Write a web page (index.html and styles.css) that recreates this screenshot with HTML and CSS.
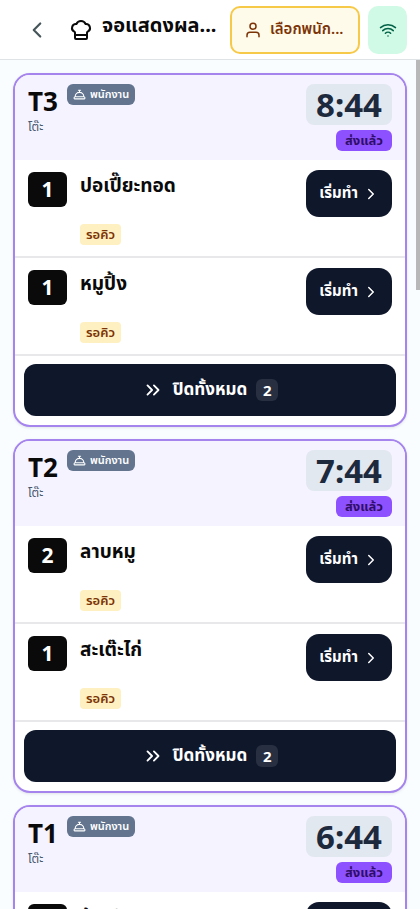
FILE: index.html
```html
<!DOCTYPE html>
<html lang="th">
<head>
<meta charset="utf-8">
<meta name="viewport" content="width=device-width, initial-scale=1">
<title>จอแสดงผลครัว</title>
<link rel="stylesheet" href="styles.css">
</head>
<body>
<svg class="sprite" aria-hidden="true">
  <symbol id="bell" viewBox="0 0 24 24"><path d="M3 20a1 1 0 0 1-1-1v-1a2 2 0 0 1 2-2h16a2 2 0 0 1 2 2v1a1 1 0 0 1-1 1ZM20 16a8 8 0 1 0-16 0M12 4v4M10 4h4"/></symbol>
  <symbol id="chevron" viewBox="0 0 24 24"><path d="m9 18 6-6-6-6"/></symbol>
  <symbol id="chevrons" viewBox="0 0 24 24"><path d="m6 17 5-5-5-5M13 17l5-5-5-5"/></symbol>
</svg>
<header class="topbar">
  <button class="back" aria-label="ย้อนกลับ"><svg viewBox="0 0 24 24"><path d="m15 18-6-6 6-6"/></svg></button>
  <svg class="chef" viewBox="0 0 24 24" aria-hidden="true"><path d="M17 21a1 1 0 0 0 1-1v-5.35c0-.457.316-.844.727-1.041a4 4 0 0 0-2.134-7.589 5 5 0 0 0-9.186 0 4 4 0 0 0-2.134 7.588c.411.198.727.585.727 1.041V20a1 1 0 0 0 1 1ZM6 17h12"/></svg>
  <h1 class="title">จอแสดงผล...</h1>
  <button class="staff"><svg viewBox="0 0 24 24"><circle cx="12" cy="7" r="4"/><path d="M4 21v-2a4 4 0 0 1 4-4h8a4 4 0 0 1 4 4v2"/></svg><span>เลือกพนัก...</span></button>
  <button class="wifi" aria-label="เชื่อมต่อแล้ว"><svg viewBox="0 0 24 24"><path d="M12 20h.01M2 8.820a15 15 0 0 1 20 0M5 12.859a10 10 0 0 1 14 0M8.500 16.429a5 5 0 0 1 7 0"/></svg></button>
</header>
<main class="orders">
  <article class="card">
    <header class="card-head">
      <div class="table-info"><h2>T3</h2><p>โต๊ะ</p></div>
      <span class="source"><svg><use href="#bell"/></svg>พนักงาน</span>
      <div class="status"><time>8:44</time><span class="sent">ส่งแล้ว</span></div>
    </header>
    <ul>
      <li><span class="qty">1</span><div class="dish"><h3>ปอเปี๊ยะทอด</h3><span class="queue">รอคิว</span></div><button class="start">เริ่มทำ<svg><use href="#chevron"/></svg></button></li>
      <li><span class="qty">1</span><div class="dish"><h3>หมูปิ้ง</h3><span class="queue">รอคิว</span></div><button class="start">เริ่มทำ<svg><use href="#chevron"/></svg></button></li>
    </ul>
    <footer><button class="close-all"><svg><use href="#chevrons"/></svg>ปิดทั้งหมด<span class="count">2</span></button></footer>
  </article>
  <article class="card">
    <header class="card-head">
      <div class="table-info"><h2>T2</h2><p>โต๊ะ</p></div>
      <span class="source"><svg><use href="#bell"/></svg>พนักงาน</span>
      <div class="status"><time>7:44</time><span class="sent">ส่งแล้ว</span></div>
    </header>
    <ul>
      <li><span class="qty">2</span><div class="dish"><h3>ลาบหมู</h3><span class="queue">รอคิว</span></div><button class="start">เริ่มทำ<svg><use href="#chevron"/></svg></button></li>
      <li><span class="qty">1</span><div class="dish"><h3>สะเต๊ะไก่</h3><span class="queue">รอคิว</span></div><button class="start">เริ่มทำ<svg><use href="#chevron"/></svg></button></li>
    </ul>
    <footer><button class="close-all"><svg><use href="#chevrons"/></svg>ปิดทั้งหมด<span class="count">2</span></button></footer>
  </article>
  <article class="card">
    <header class="card-head">
      <div class="table-info"><h2>T1</h2><p>โต๊ะ</p></div>
      <span class="source"><svg><use href="#bell"/></svg>พนักงาน</span>
      <div class="status"><time>6:44</time><span class="sent">ส่งแล้ว</span></div>
    </header>
    <ul>
      <li><span class="qty">1</span><div class="dish"><h3>ข้าวผัดปู</h3><span class="queue">รอคิว</span></div><button class="start">เริ่มทำ<svg><use href="#chevron"/></svg></button></li>
    </ul>
  </article>
</main>
<div class="scroll-thumb"></div>
</body>
</html>
```

FILE: styles.css
```css
* { box-sizing: border-box; margin: 0; padding: 0; }
body {
  height: 100vh;
  display: flex;
  flex-direction: column;
  overflow: hidden;
  background: #fafdff;
  color: #0a0a0a;
  font-family: "Noto Sans", "Noto Sans Thai", sans-serif;
}
button { font: inherit; border: 0; cursor: pointer; }
svg { fill: none; stroke: currentColor; stroke-width: 2; stroke-linecap: round; stroke-linejoin: round; flex: none; }
ul { list-style: none; }
.sprite { display: none; }

.topbar {
  flex: none;
  height: 60px;
  display: flex;
  align-items: center;
  padding: 0 13px;
  background: #fff;
  border-bottom: 1px solid #dfe3e6;
}
.back { width: 48px; height: 48px; display: grid; place-items: center; background: none; color: #45555a; }
.back svg { width: 26px; height: 26px; }
.chef { width: 24px; height: 24px; margin: 0 9px 0 8px; }
.title {
  flex: 1;
  min-width: 0;
  white-space: nowrap;
  font-size: 20px;
  line-height: 32px;
  padding-bottom: 10px;
}
.staff {
  width: 130px;
  height: 48px;
  margin: 0 8px 0 16px;
  padding: 0 12px;
  display: flex;
  align-items: center;
  gap: 8px;
  border: 2px solid #f7c948;
  border-radius: 10px;
  background: #fffbeb;
  color: #7b3306;
  font-size: 15px;
  font-weight: 600;
}
.staff svg { width: 18px; height: 18px; }
.staff span { min-width: 0; white-space: nowrap; }
.wifi { width: 39px; height: 48px; display: grid; place-items: center; border-radius: 10px; background: #d0fae5; color: #006045; }
.wifi svg { width: 18px; height: 18px; }

.orders {
  flex: 1;
  min-height: 0;
  overflow-y: auto;
  scrollbar-width: none;
  display: flex;
  flex-direction: column;
  gap: 12px;
  padding: 13px;
}
.card {
  flex: none;
  overflow: hidden;
  border: 2px solid #a684ee;
  border-radius: 17px;
  background: #fff;
  box-shadow: 0 1px 3px rgba(0, 0, 0, .1);
}
.card-head {
  height: 85px;
  display: flex;
  align-items: flex-start;
  padding: 9px 13px;
  background: #f5f3ff;
}
.table-info h2 { font-size: 26px; line-height: 34px; }
.table-info p { font-size: 12px; line-height: 18px; color: #45556c; }
.source {
  height: 21px;
  display: flex;
  align-items: center;
  gap: 4px;
  margin-left: 9px;
  padding: 0 6px;
  border-radius: 6px;
  background: #62748e;
  color: #fff;
  font-size: 11px;
  font-weight: 600;
}
.source svg { width: 13px; height: 13px; }
.status { margin-left: auto; display: flex; flex-direction: column; align-items: flex-end; gap: 5px; }
.status time {
  padding: 0 10px;
  border-radius: 8px;
  background: #e2e8f0;
  color: #1d293d;
  font-size: 33px;
  font-weight: 700;
  line-height: 41px;
}
.sent {
  padding: 0 9px;
  border-radius: 6px;
  background: #8e51ff;
  color: #2f0d68;
  font-size: 13px;
  font-weight: 700;
  line-height: 21px;
}

.card li {
  height: 98px;
  display: flex;
  align-items: flex-start;
  padding: 10px 13px;
  border-bottom: 2px solid #e8e8ea;
}
.qty {
  width: 39px;
  height: 35px;
  margin-top: 2px;
  border-radius: 6px;
  background: #0a0a0a;
  color: #fff;
  font-size: 21px;
  font-weight: 700;
  line-height: 35px;
  text-align: center;
}
.dish {
  flex: 1;
  display: flex;
  flex-direction: column;
  align-items: flex-start;
  gap: 24px;
  margin-left: 13px;
}
.dish h3 { font-size: 19px; line-height: 30px; font-weight: 700; }
.queue {
  padding: 0 6px;
  border-radius: 4px;
  background: #fef0c0;
  color: #7b3306;
  font-size: 13px;
  font-weight: 600;
  line-height: 21px;
}
.start {
  height: 47px;
  display: flex;
  align-items: center;
  gap: 4px;
  padding: 0 12px 0 13px;
  border-radius: 13px;
  background: #0f172b;
  color: #fff;
  font-size: 15px;
  font-weight: 700;
}
.start svg { width: 18px; height: 18px; }
.card footer { padding: 8px 9px 9px; }
.close-all {
  width: 100%;
  height: 52px;
  display: flex;
  align-items: center;
  justify-content: center;
  gap: 9px;
  border-radius: 12px;
  background: #0f172b;
  color: #fff;
  font-size: 17px;
  font-weight: 700;
}
.close-all svg { width: 22px; height: 22px; }
.count { width: 22px; height: 22px; border-radius: 6px; background: #272f41; font-size: 15px; line-height: 22px; }
.scroll-thumb { position: fixed; top: 60px; right: 0; width: 4px; height: 230px; background: #b8b8b8; }
```
